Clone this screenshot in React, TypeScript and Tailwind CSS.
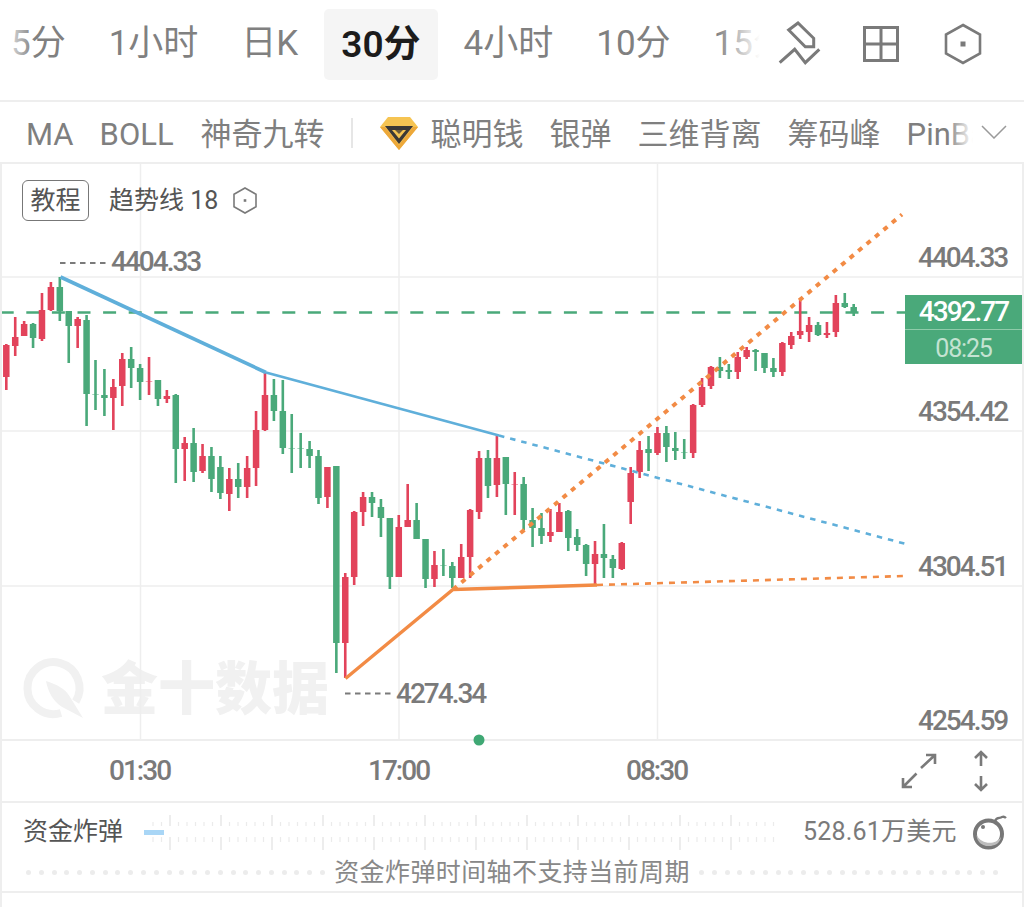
import React from 'react';

type Candle = [number, number, number, number, number];

// up flag (1 red, 0 green), wick top, body top, body bottom, wick bottom, all in page pixels
const candles: Candle[] = [
  [1, 344, 345, 377, 390], [1, 317, 337, 346, 356], [1, 321, 324, 336, 336], [0, 323, 324, 338, 348],
  [1, 293, 310, 339, 341], [1, 282, 287, 310, 311], [0, 277, 287, 311, 321], [0, 311, 311, 326, 363],
  [1, 317, 319, 326, 348], [0, 315, 320, 394, 426], [0, 360, 394, 395, 410], [0, 369, 395, 398, 416],
  [1, 379, 387, 398, 430], [1, 353, 359, 386, 406], [0, 347, 359, 368, 388], [0, 364, 368, 382, 400],
  [1, 357, 381, 382, 395], [0, 380, 380, 399, 406], [1, 390, 396, 399, 403], [0, 394, 395, 449, 483],
  [1, 437, 443, 449, 481], [0, 428, 443, 472, 482], [1, 444, 456, 471, 473], [0, 447, 456, 479, 492],
  [0, 456, 467, 493, 499], [1, 468, 479, 494, 511], [0, 463, 479, 487, 498], [1, 456, 468, 487, 498],
  [1, 411, 430, 468, 486], [1, 373, 395, 430, 431], [0, 379, 395, 411, 421], [0, 380, 411, 448, 454],
  [0, 414, 448, 449, 473], [0, 433, 448, 449, 468], [0, 441, 449, 456, 468], [0, 450, 456, 498, 504],
  [1, 467, 467, 497, 508], [0, 466, 466, 643, 673], [1, 573, 577, 643, 678], [1, 511, 512, 577, 585],
  [1, 492, 497, 512, 526], [0, 492, 497, 503, 517], [0, 499, 507, 518, 537], [0, 518, 518, 577, 589],
  [1, 515, 527, 577, 577], [1, 484, 520, 527, 527], [0, 503, 520, 539, 539], [0, 539, 539, 579, 588],
  [1, 551, 565, 579, 587], [0, 549, 565, 566, 576], [0, 562, 566, 578, 588], [1, 544, 557, 578, 578],
  [1, 509, 510, 557, 578], [1, 451, 458, 512, 519], [0, 450, 458, 486, 498], [1, 436, 458, 485, 497],
  [0, 457, 457, 484, 515], [1, 472, 484, 485, 515], [0, 477, 484, 520, 530], [0, 508, 520, 528, 547],
  [0, 513, 528, 536, 544], [1, 509, 532, 536, 542], [1, 503, 512, 532, 532], [0, 510, 511, 538, 551],
  [0, 529, 537, 545, 551], [0, 544, 545, 564, 576], [1, 541, 554, 564, 585], [0, 524, 554, 558, 578],
  [0, 555, 559, 568, 578], [1, 542, 543, 569, 570], [1, 467, 473, 502, 524], [1, 441, 450, 472, 478],
  [0, 436, 449, 453, 471], [1, 427, 433, 453, 455], [0, 426, 433, 447, 462], [0, 432, 448, 451, 460],
  [0, 439, 452, 453, 459], [1, 404, 405, 453, 458], [1, 378, 387, 405, 407], [1, 366, 367, 386, 389],
  [0, 357, 367, 371, 378], [0, 364, 370, 372, 379], [1, 352, 357, 372, 379], [1, 347, 350, 357, 359],
  [0, 349, 350, 352, 371], [0, 353, 353, 368, 373], [0, 358, 368, 372, 377], [1, 342, 343, 372, 376],
  [1, 332, 336, 345, 349], [1, 300, 331, 335, 339], [1, 317, 325, 332, 342], [0, 322, 325, 335, 336],
  [1, 322, 333, 335, 338], [1, 295, 303, 332, 337], [0, 293, 303, 307, 308], [0, 304, 307, 313, 316],
];

const tabs = ['5分', '1小时', '日K', '30分', '4小时', '10分', '15分'];
const indicators = ['聪明钱', '银弹', '三维背离', '筹码峰', 'PinBar'];
const ticks = Array.from({ length: 74 }, (_, i) => i - 2);
const dots = Array.from({ length: 24 }, (_, i) => i);

const priceLabel = "font-['Roboto',sans-serif] text-[28px] leading-[32px] font-medium tracking-[-2px] text-[#7a7a7a]";

const App: React.FC = () => {
  return (
    <div className="w-[1024px] h-[907px] bg-white overflow-hidden font-['Roboto','Noto_Sans_CJK_SC',sans-serif]">
      {/* Period tabs */}
      <div className="h-[102px] border-b-2 border-[#eeeeee] flex items-start">
        <div className="relative w-[760px] h-[71px] mt-[9px] overflow-hidden shrink-0">
          <div className="flex items-center gap-[9px] -ml-[6px] h-full">
            {tabs.map((tab) => (
              <div
                key={tab}
                className={`h-[71px] px-[17px] flex items-center whitespace-nowrap rounded-[5px] ${
                  tab === '30分' ? 'bg-[#f5f5f5] text-[#1c1c1c] text-[37px] font-semibold' : 'text-[#808080] text-[35px]'
                }`}
              >
                {tab}
              </div>
            ))}
          </div>
          <div className="absolute left-0 top-0 h-full w-[34px] bg-gradient-to-r from-white to-transparent" />
          <div className="absolute right-0 top-0 h-full w-[44px] bg-gradient-to-l from-white to-transparent" />
        </div>
        <svg className="w-[48px] h-[48px] mt-[20px] ml-[16px] shrink-0" viewBox="0 0 48 48" fill="none" stroke="#7a7a7a" strokeWidth="3">
          <path d="M22 3 L12.7 10 L29.3 26.7 H37.7 V18.3 Z" />
          <path d="M3.7 42.7 L18.7 29.3 L29.3 42.7 L43.3 29.3" />
        </svg>
        <svg className="w-[38px] h-[38px] mt-[25px] ml-[38px] shrink-0" viewBox="0 0 38 38" fill="none" stroke="#7a7a7a" strokeWidth="3">
          <rect x="2.5" y="2.5" width="33" height="33" />
          <path d="M19 2.5 V35.5 M2.5 19 H35.5" />
        </svg>
        <svg className="w-[38px] h-[42px] mt-[23px] ml-[44px] shrink-0" viewBox="0 0 38 42" fill="none" stroke="#7a7a7a" strokeWidth="2.6">
          <path d="M19 2 L36 11.5 V30.5 L19 40 L2 30.5 V11.5 Z" />
          <rect x="16.5" y="18.5" width="5" height="5" fill="#7a7a7a" stroke="none" />
        </svg>
      </div>

      {/* Indicator tabs */}
      <div className="h-[62px] pt-[7px] border-b-2 border-[#eeeeee] flex items-center pl-[26px] text-[31px] text-[#7f7f7f] whitespace-nowrap">
        <span>MA</span>
        <span className="ml-[26px]">BOLL</span>
        <span className="ml-[27px]">神奇九转</span>
        <div className="w-[2px] h-[30px] bg-[#e6e6e6] ml-[26px] -mt-[5px]" />
        <svg className="w-[38px] h-[33px] ml-[27px] -mt-[5px] shrink-0" viewBox="0 0 38 33">
          <path d="M8 0 H30 L38 10 L19 33 L0 10 Z" fill="#f6c452" />
          <path d="M0 10 L19 33 L38 10 L33 10 L19 28 L5 10 Z" fill="#eda83a" />
          <path d="M5 9 H33 L19 27 Z" fill="#3b3836" />
          <path d="M12 13 H26 L19 21.5 Z" fill="#f6c452" />
          <path d="M15 13 H23 L19 17 Z" fill="#6b5a3c" />
        </svg>
        <div className="relative flex items-center gap-[26px] ml-[13px] w-[542px] overflow-hidden shrink-0">
          {indicators.map((item) => (
            <span key={item}>{item}</span>
          ))}
          <div className="absolute right-0 top-0 h-full w-[26px] bg-gradient-to-l from-white to-transparent" />
        </div>
        <svg className="w-[26px] h-[14px] ml-[8px] -mt-[7px] shrink-0" viewBox="0 0 26 14" fill="none" stroke="#9a9a9a" strokeWidth="1.5">
          <path d="M1 1 L13 13 L25 1" />
        </svg>
      </div>

      <div className="border-x-2 border-[#eeeeee] h-[743px]">
        {/* Chart */}
        <div className="relative h-[577px] border-b-2 border-[#eeeeee] -mx-[2px]">
          <span className="absolute left-[101px] top-[486px] text-[57px] leading-[68px] font-black text-[#f1f1f1] font-['Noto_Sans_CJK_SC',sans-serif] whitespace-nowrap">
            金十数据
          </span>
          <svg className="absolute left-0 top-0 w-[1024px] h-[577px] overflow-visible" viewBox="0 164 1024 577" fill="none">
            {/* grid */}
            <path d="M2 277 H1022 M2 431 H1022 M2 586 H1022 M140.5 164 V740 M399 164 V740 M657.5 164 V740" stroke="#eeeeee" strokeWidth="1.5" />
            {/* watermark logo */}
            <path d="M75.7 701.6 A26 26 0 1 0 61 713" stroke="#f1f1f1" strokeWidth="8" />
            <path d="M46 681 C56 684 66 689 70 697 L83 718 L66 709 C54 704 48 692 46 681 Z" fill="#f1f1f1" />
            {/* last price */}
            <path d="M2 312.5 H905" stroke="#4aa97a" strokeWidth="2.5" strokeDasharray="13 12.6" strokeDashoffset="1.3" />
            {candles.map(([up, wickTop, bodyTop, bodyBottom, wickBottom], i) => {
              const x = 6.3 + 8.92 * i;
              const color = up ? '#e2435b' : '#4aa97a';
              return (
                <g key={i} fill={color}>
                  <rect x={x - 1.3} y={wickTop} width="2.6" height={wickBottom - wickTop} />
                  <rect x={x - 3.25} y={bodyTop} width="6.5" height={bodyBottom - bodyTop} opacity={bodyBottom - bodyTop <= 1 ? 0.5 : 1} />
                </g>
              );
            })}
            {/* trend lines */}
            <path d="M60.5 277 L266 372.5" stroke="#5fafda" strokeWidth="3.6" />
            <path d="M266 372.5 L499 435.5" stroke="#5fafda" strokeWidth="2.8" />
            <path d="M499 435.5 L906 544" stroke="#5fafda" strokeWidth="2.6" strokeDasharray="5.5 6" />
            <path d="M345.5 678.5 L453 589.5 L597 585" stroke="#f28b45" strokeWidth="3.4" />
            <path d="M453 589.5 L902 214.5" stroke="#f28b45" strokeWidth="4" strokeDasharray="5 6" />
            <path d="M597 585 L905 576" stroke="#f28b45" strokeWidth="2.6" strokeDasharray="6 6" />
            {/* extreme markers */}
            <path d="M60 263 H106 M345 693.5 H392" stroke="#7a7a7a" strokeWidth="2" strokeDasharray="5.5 4.5" />
            <circle cx="479" cy="740" r="5.5" fill="#3fa874" />
          </svg>

          {/* Toolbar over the chart */}
          <div className="absolute left-[22px] top-[16px] flex items-center">
            <div className="w-[67px] h-[41px] border border-[#777777] rounded-[6px] flex items-center justify-center text-[25px] text-[#555555] bg-white">
              教程
            </div>
            <span className="ml-[20px] text-[25px] text-[#555555] whitespace-nowrap">趋势线 18</span>
            <svg className="w-[24px] h-[27px] ml-[15px]" viewBox="0 0 24 27" fill="none" stroke="#7a7a7a" strokeWidth="1.6">
              <path d="M12 1 L23 7.2 V19.8 L12 26 L1 19.8 V7.2 Z" />
              <rect x="10.7" y="12.2" width="2.6" height="2.6" fill="#7a7a7a" stroke="none" />
            </svg>
          </div>

          {/* Price labels */}
          <span className={`absolute left-[111px] top-[82px] ${priceLabel}`}>4404.33</span>
          <span className={`absolute left-[396px] top-[514px] ${priceLabel}`}>4274.34</span>
          <span className={`absolute left-[918px] top-[78px] ${priceLabel}`}>4404.33</span>
          <span className={`absolute left-[918px] top-[232px] ${priceLabel}`}>4354.42</span>
          <span className={`absolute left-[918px] top-[387px] ${priceLabel}`}>4304.51</span>
          <span className={`absolute left-[918px] top-[541px] ${priceLabel}`}>4254.59</span>

          <div className="absolute left-[905px] top-[131px] w-[117px] h-[69px] bg-[#4aa97a] flex flex-col font-['Roboto',sans-serif]">
            <div className="h-[35px] border-b border-[#8fccaa] flex items-center justify-center text-[28px] font-medium tracking-[-2px] text-white">
              4392.77
            </div>
            <div className="flex-1 flex items-center justify-center text-[25px] tracking-[-1.2px] text-[#c4e3d2]">08:25</div>
          </div>
        </div>

        {/* Time axis */}
        <div className="relative h-[62px] border-b-2 border-[#eeeeee] flex items-center justify-end gap-[36px] pr-[33px]">
          <span className={`absolute left-[107px] top-[14px] w-[60px] text-center ${priceLabel}`}>01:30</span>
          <span className={`absolute left-[366px] top-[14px] w-[60px] text-center ${priceLabel}`}>17:00</span>
          <span className={`absolute left-[624px] top-[14px] w-[60px] text-center ${priceLabel}`}>08:30</span>
          <svg className="w-[36px] h-[36px]" viewBox="0 0 36 36" fill="none" stroke="#7a7a7a" strokeWidth="2.6">
            <path d="M20 15 L34 2 M25 2 H34 V11" />
            <path d="M15.5 20.5 L2 34 M2 25 V34 H11" />
          </svg>
          <svg className="w-[16px] h-[42px]" viewBox="0 0 16 42" fill="none" stroke="#7a7a7a" strokeWidth="2.6">
            <path d="M8 16 V2 M2 8 L8 2 L14 8" />
            <path d="M8 26 V40 M2 34 L8 40 L14 34" />
          </svg>
        </div>

        {/* Capital bomb */}
        <div className="h-[91px] border-b-2 border-[#eeeeee] text-[#7a7a7a]">
          <div className="h-[60px] flex items-center pl-[21px] -mt-[1px]">
            <span className="text-[25px] text-[#555555] whitespace-nowrap">资金炸弹</span>
            <svg className="w-[631px] h-[36px] ml-[21px] shrink-0" viewBox="144 814 631 36">
              {ticks.map((k) => {
                const x = 170 + 8.5 * k;
                const major = k % 6 === 0;
                return (
                  <path
                    key={k}
                    d={major ? `M${x} 815 V826 M${x} 837 V850` : `M${x} 822 V826 M${x} 837 V842`}
                    stroke={major ? '#e2e2e2' : '#ebebeb'}
                    strokeWidth="1.2"
                  />
                );
              })}
              <rect x="144" y="830" width="20" height="5" fill="#a9d6f6" />
            </svg>
            <span className="ml-[28px] text-[25px] whitespace-nowrap tracking-[0.2px]">528.61万美元</span>
            <svg className="w-[34px] h-[38px] ml-[16px] shrink-0" viewBox="0 0 34 38" fill="none">
              <path d="M22 8 C24 3 27 6 29 4 C31 3 32 4 33 5" stroke="#777777" strokeWidth="2.4" />
              <circle cx="15.5" cy="21" r="13.5" fill="#ffffff" stroke="#777777" strokeWidth="4" />
              <path d="M3.5 22 C8 31 22 33 28 24 C27 31 21 33 15.5 33 C9 33 4 29 3.5 22 Z" fill="#bdbdbd" />
              <circle cx="10" cy="14" r="2" fill="#777777" />
            </svg>
          </div>
          <div className="h-[21px] flex items-center justify-between pl-[24px] pr-[24px]">
            <div className="w-[299px] flex justify-between">
              {dots.map((d) => (
                <span key={d} className="w-[5px] h-[5px] rounded-full bg-[#ececec]" />
              ))}
            </div>
            <span className="text-[25px] tracking-[0.4px] text-[#888888] whitespace-nowrap">资金炸弹时间轴不支持当前周期</span>
            <div className="w-[299px] flex justify-between">
              {dots.map((d) => (
                <span key={d} className="w-[5px] h-[5px] rounded-full bg-[#ececec]" />
              ))}
            </div>
          </div>
        </div>
      </div>
    </div>
  );
};

export default App;
